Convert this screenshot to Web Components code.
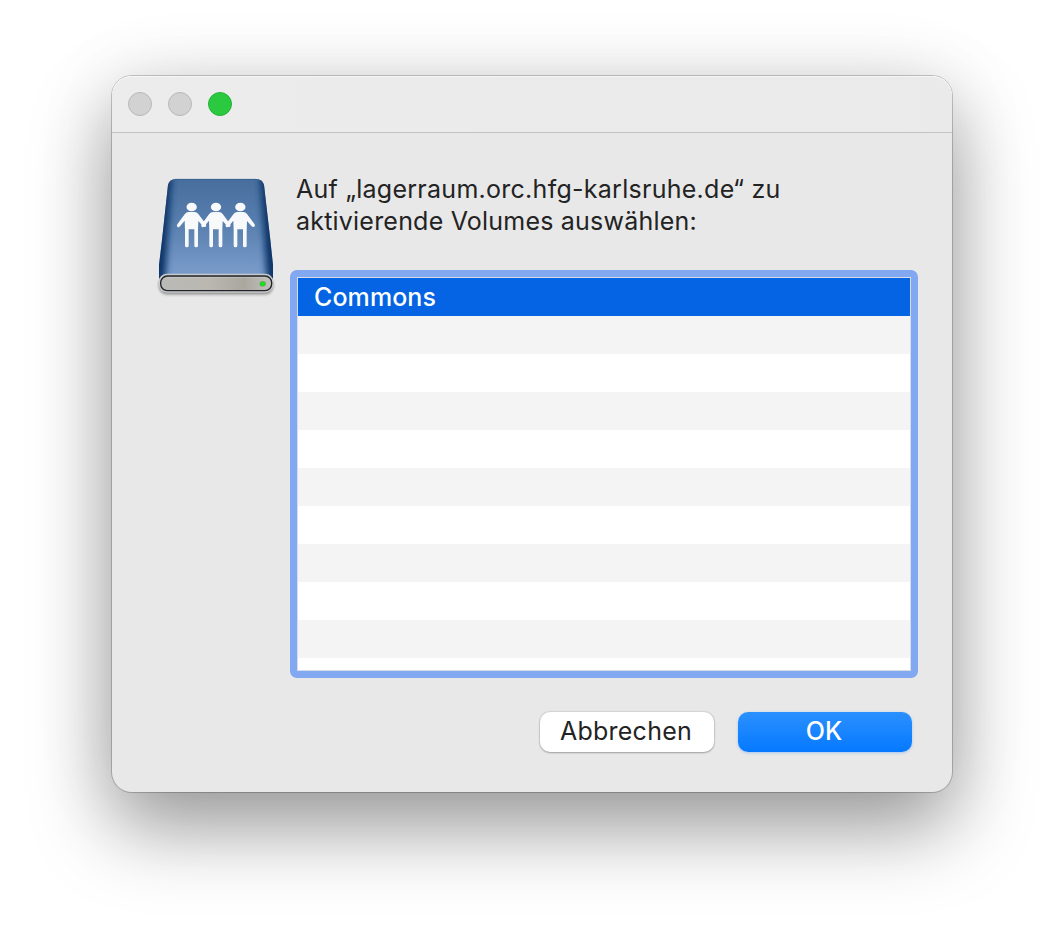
<!DOCTYPE html>
<html lang="de">
<head>
<meta charset="utf-8">
<title>Volumes auswählen</title>
<style>
html,body{margin:0;height:100%;background:#fff;overflow:hidden}
body{box-sizing:border-box;padding:76px 112px 0;font-family:Inter,"Liberation Sans",sans-serif;font-size:25px;color:#232323}
</style>
</head>
<body>
<mac-window>
  <server-drive-icon slot="icon"></server-drive-icon>
  <message-text slot="message"><span>Auf „lagerraum.orc.hfg-karlsruhe.de“ zu</span><span>aktivierende Volumes auswählen:</span></message-text>
  <volume-list slot="list"><volume-row selected>Commons</volume-row></volume-list>
  <push-button slot="actions">Abbrechen</push-button>
  <push-button slot="actions" primary>OK</push-button>
</mac-window>
<script>
const define = (name, html) => customElements.define(name, class extends HTMLElement {
  constructor() {
    super();
    this.attachShadow({mode: 'open'}).innerHTML = html;
  }
});

define('traffic-light', `<style>
:host{display:block;box-sizing:border-box;width:24px;height:24px;border-radius:50%;background:#d2d2d2;border:1px solid #b8b8b8}
:host([active]){background:#2ac940;border-color:#23b337}
</style>`);

define('mac-window', `<style>
:host{display:flex;flex-direction:column;box-sizing:border-box;width:840px;height:716px;border-radius:20px;background:#e8e8e8;
box-shadow:inset 0 2px 1px -1px #f8f8f8,0 0 0 1px rgba(0,0,0,.2),0 36px 80px rgba(0,0,0,.37),0 6px 80px rgba(0,0,0,.1)}
header{display:flex;gap:16px;box-sizing:border-box;height:57px;padding:16px 0 0 16px;border-bottom:1px solid #c2c2c2;background:linear-gradient(90deg,#ececec,#eaeaea);border-radius:20px 20px 0 0;box-shadow:inset 0 1px 0 #f6f6f6}
main{display:grid;grid-template-columns:140px 628px;grid-template-rows:137px 408px 1fr;padding-left:38px}
.icon{grid-row:1/3;padding-top:37px}
.message{padding:40px 0 0 6px}
.actions{grid-column:2;display:flex;justify-content:flex-end;gap:24px;padding:34px 6px 0 0}
</style>
<header><traffic-light></traffic-light><traffic-light></traffic-light><traffic-light active></traffic-light></header>
<main><div class="icon"><slot name="icon"></slot></div><div class="message"><slot name="message"></slot></div><slot name="list"></slot><div class="actions"><slot name="actions"></slot></div></main>`);

define('message-text', `<style>
:host{display:block;line-height:32px;white-space:nowrap}
::slotted(span){display:block;letter-spacing:.27px}
::slotted(span:last-child){letter-spacing:.21px}
</style><slot></slot>`);

define('volume-list', `<style>
:host{display:block;box-sizing:border-box;width:628px;height:408px;border:7px solid #81a8f1;border-radius:7px;background:#81a8f1}
div{box-sizing:border-box;height:394px;border:1px solid #d8dce4;background:repeating-linear-gradient(#fff 0 38px,#f4f4f4 38px 76px)}
</style><div><slot></slot></div>`);

define('volume-row', `<style>
:host{display:block;box-sizing:border-box;height:38px;line-height:38px;padding-left:16px;letter-spacing:.08px}
:host([selected]){background:#0464e3;color:#fff;font-weight:500}
</style><slot></slot>`);

define('push-button', `<style>
:host{display:block;width:174px;height:40px}
button{display:block;width:174px;height:40px;padding:0 2px 2px 0;border:0;border-radius:10px;background:#fff;color:#232323;font:inherit;letter-spacing:.25px;box-shadow:0 0 1px 1px rgba(0,0,0,.08),0 1px 2px rgba(0,0,0,.25)}
:host([primary]) button{background:linear-gradient(#2b90ff,#0579ff);color:#fff;font-weight:500;letter-spacing:0;box-shadow:0 1px 3px rgba(5,121,255,.3)}
</style><button><slot></slot></button>`);

define('server-drive-icon', `<style>
:host{display:block;width:132px;height:132px}svg{display:block}
</style>
<svg width="132" height="132" viewBox="0 0 396 396">
<defs>
<linearGradient id="top" x1="0" y1="0" x2="0" y2="1"><stop offset="0" stop-color="#466d9c"/><stop offset=".4" stop-color="#557cac"/><stop offset="1" stop-color="#7d9fce"/></linearGradient>
<linearGradient id="metal"><stop offset="0" stop-color="#babab7"/><stop offset=".45" stop-color="#bab7b0"/><stop offset=".75" stop-color="#aaa79f"/><stop offset="1" stop-color="#c2c1bc"/></linearGradient>
<filter id="soft" x="-20%" y="-50%" width="140%" height="200%"><feGaussianBlur stdDeviation="5"/></filter>
<filter id="edge" x="-60%" y="-5%" width="220%" height="110%"><feGaussianBlur stdDeviation="9"/></filter>
<clipPath id="face"><path d="M78 27H318Q338 27 342 45L361 210L369 285V326H27V285L36 210L54 45Q58 27 78 27Z"/></clipPath>
</defs>
<rect x="27" y="320" width="342" height="53" rx="24" fill="#000" opacity=".42" filter="url(#soft)"/>
<g clip-path="url(#face)">
<rect x="20" y="20" width="356" height="310" fill="url(#top)"/>
<path d="M30 0H67L45 340H0Z" fill="#103468" filter="url(#edge)"/>
<path d="M366 0H329L351 340H396Z" fill="#103468" filter="url(#edge)"/>
</g>
<path d="M70 29Q75 28 82 28H314Q323 28 328 30" fill="none" stroke="#335a8b" stroke-width="2"/>
<rect x="26" y="311" width="344" height="57" rx="25" fill="#c8cacb"/>
<rect x="32" y="318" width="333" height="44" rx="20" fill="url(#metal)" stroke="#20242a" stroke-width="4"/>
<path d="M50 322H345" stroke="#dadad7" stroke-width="2" opacity=".6"/>
<rect x="330" y="335" width="16" height="13" rx="5" fill="#19e41c" stroke="#319b30" stroke-width="1.500"/>
<g fill="#f8f9fb">
<g id="person"><ellipse cx="125" cy="111" rx="15.5" ry="13"/><path d="M116 126H134Q141 126 145 132L168 163Q170 167 167 170Q163 173 159 169L145 153L144 180V227Q144 232 138.500 232Q133 232 133 227V178H116V227Q116 232 110.500 232Q105 232 105 227V180L104 152L90 169Q86 174 82 170Q79 167 82 163L104 133Q109 126 116 126Z"/></g>
<use href="#person" x="73"/><use href="#person" x="146"/>
</g>
</svg>`);
</script>
</body>
</html>
